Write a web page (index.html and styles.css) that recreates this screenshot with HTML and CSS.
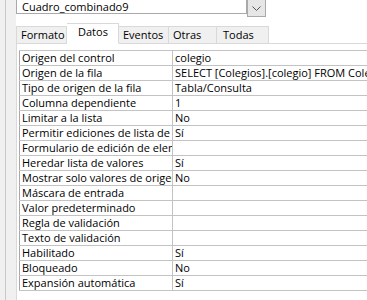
FILE: index.html
```html
<!DOCTYPE html>
<html lang="es">
<head>
    <meta charset="UTF-8">
    <title>Hoja de propiedades</title>
    <link rel="stylesheet" href="styles.css">
</head>
<body>
    <div class="window">
        <div class="gutter"></div>

        <div class="sheet">
            <!-- Object selector -->
            <div class="selector">
                <div class="selector-text">Cuadro_combinado9</div>
                <div class="selector-btn">
                    <svg width="9" height="5" viewBox="0 0 9 5">
                        <path d="M0.5 0.5 L4.5 4.5 L8.5 0.5" fill="none" stroke="#555" stroke-width="1"/>
                    </svg>
                </div>
            </div>

            <!-- Tabs -->
            <div class="tabs">
                <div class="tab tab-formato">Formato</div>
                <div class="tab tab-datos active">Datos</div>
                <div class="tab tab-eventos">Eventos</div>
                <div class="tab tab-otras">Otras</div>
                <div class="tab tab-todas">Todas</div>
                <div class="tab-fill"></div>
            </div>

            <!-- Property grid -->
            <div class="panel">
                <table class="props">
                    <tr><td class="name">Origen del control</td><td class="value">colegio</td></tr>
                    <tr><td class="name">Origen de la fila</td><td class="value">SELECT [Colegios].[colegio] FROM Colegios;</td></tr>
                    <tr><td class="name">Tipo de origen de la fila</td><td class="value">Tabla/Consulta</td></tr>
                    <tr><td class="name">Columna dependiente</td><td class="value">1</td></tr>
                    <tr><td class="name">Limitar a la lista</td><td class="value">No</td></tr>
                    <tr><td class="name">Permitir ediciones de lista de valores</td><td class="value">Sí</td></tr>
                    <tr><td class="name">Formulario de edición de elementos de lista</td><td class="value"></td></tr>
                    <tr><td class="name">Heredar lista de valores</td><td class="value">Sí</td></tr>
                    <tr><td class="name">Mostrar solo valores de origen de fila</td><td class="value">No</td></tr>
                    <tr><td class="name">Máscara de entrada</td><td class="value"></td></tr>
                    <tr><td class="name">Valor predeterminado</td><td class="value"></td></tr>
                    <tr><td class="name">Regla de validación</td><td class="value"></td></tr>
                    <tr><td class="name">Texto de validación</td><td class="value"></td></tr>
                    <tr><td class="name">Habilitado</td><td class="value">Sí</td></tr>
                    <tr><td class="name">Bloqueado</td><td class="value">No</td></tr>
                    <tr><td class="name">Expansión automática</td><td class="value">Sí</td></tr>
                </table>
            </div>
        </div>
    </div>
</body>
</html>
```

FILE: styles.css
```css
/* General */
body {
    margin: 0;
    background: #ffffff;
    font-family: "Open Sans", "Noto Sans", sans-serif;
    font-size: 11px;
    color: #000;
    overflow: hidden;
}

.window {
    display: flex;
    height: 300px;
}

/* Left grey strip */
.gutter {
    width: 5px;
    flex: none;
    background: #f0f0f0;
    border-right: 1px solid #c9c9c9;
}

.sheet {
    flex: 1;
    background: #f0f0f0;
    padding-left: 10px;
    min-width: 0;
}

/* Object selector */
.selector {
    display: flex;
    align-items: flex-start;
    background: #ffffff;
    height: 17px;
}

.selector-text {
    width: 224px;
    height: 12px;
    line-height: 12px;
    padding: 1px 0 0 5px;
    border: 1px solid #a9a9a9;
    border-top: none;
    background: #fff;
    white-space: nowrap;
}

.selector-btn {
    width: 17px;
    height: 16px;
    border: 1px solid #a9a9a9;
    border-top: none;
    background: #e6e6e6;
    display: flex;
    justify-content: center;
    align-items: center;
}

.selector-btn svg {
    margin-top: 1px;
}

/* Tabs */
.tabs {
    display: flex;
    align-items: flex-end;
    background: #ffffff;
    padding-top: 6px;
}

.tab {
    height: 16px;
    line-height: 16px;
    background: #f0f0f0;
    border: 1px solid #d9d9d9;
    border-left: none;
    padding-left: 4px;
    white-space: nowrap;
}

.tab-formato { width: 45px; border-left: 1px solid #d9d9d9; }
.tab-eventos { width: 45px; }
.tab-otras { width: 43px; }
.tab-todas { width: 45px; padding-left: 6px; }

.tab.active {
    height: 19px;
    line-height: 16px;
    width: 40px;
    padding-left: 11px;
    background: #ffffff;
    border-bottom: 1px solid #ffffff;
}

.tab-fill {
    flex: 1;
    border-bottom: 1px solid #d9d9d9;
}

/* Property grid */
.panel {
    background: #ffffff;
    border-left: 1px solid #d9d9d9;
    padding: 6px 0 0 2px;
    height: 260px;
}

.props {
    border-collapse: collapse;
    width: 380px;
    table-layout: fixed;
}

.props td {
    height: 14px;
    padding: 0 0 0 2px;
    line-height: 14px;
    border: 1px solid #c3c3c3;
    white-space: nowrap;
    overflow: hidden;
    text-overflow: clip;
}

.props td.name {
    width: 150px;
    border-left-color: #a8a8a8;
}
```
